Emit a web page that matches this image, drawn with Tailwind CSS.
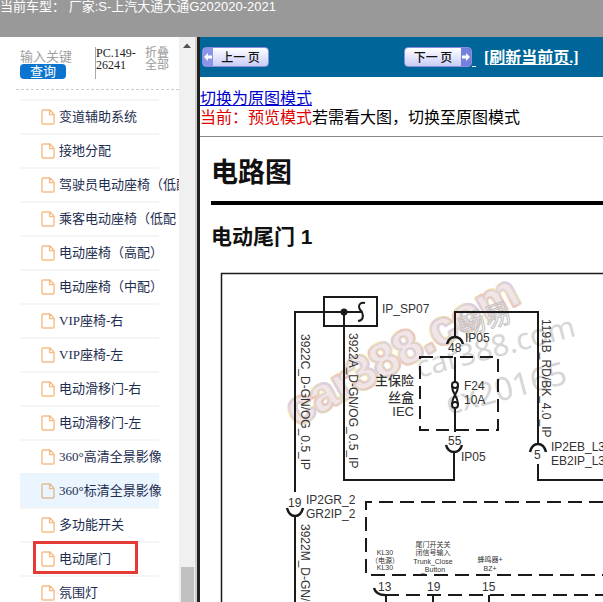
<!DOCTYPE html>
<html lang="zh-CN">
<head>
  <meta charset="UTF-8">
  <meta name="viewport" content="width=device-width, initial-scale=1.0">
  <title>电路图 - 电动尾门</title>
  <script src="https://cdn.jsdelivr.net/npm/@tailwindcss/browser@4"></script>
</head>
<body class="h-screen flex flex-col overflow-hidden bg-white font-['Liberation_Serif','Noto_Sans_CJK_SC',serif]">
  <!-- Current vehicle -->
  <header class="h-[37px] shrink-0 bg-[#999] text-white text-[13px] leading-[14px] whitespace-nowrap font-['Liberation_Sans','Noto_Sans_CJK_SC',sans-serif]">
    <span>当前车型：</span>
    <span>厂家:S-上汽大通大通G202020-2021</span>
  </header>

  <div class="flex-1 min-h-0 flex">
    <!-- Sidebar -->
    <aside class="w-[195px] shrink-0 flex">
      <div class="flex-1 min-w-0 flex flex-col overflow-hidden">
        <div class="h-[53px] shrink-0 ml-4 pl-1 flex border-b border-dashed border-[#ccc]">
          <form class="w-[75px] pt-3" onsubmit="return false">
            <input type="text" aria-label="输入关键字" placeholder="输入关键" class="block w-full h-[15px] text-[13px] leading-[15px] placeholder:text-[#a0a0a0] focus:outline-none">
            <button class="block w-[46px] h-[15px] rounded bg-[#0b74cf] text-white text-[13px] leading-[15px]">查询</button>
          </form>
          <div class="w-[50px] h-8 mt-[10px] border-l border-[#aaa] text-[12px] leading-3 text-[#222]">PC.149-<br>26241</div>
          <button class="self-start mt-[10px] w-6 text-[12px] leading-3 text-[#999] text-left">折叠全部</button>
        </div>
        <nav class="flex-1 min-h-0 overflow-hidden pt-[9px] pl-5">
          <ul id="tree" class="w-[139px] text-[13px] text-[#1c2d4f] whitespace-nowrap">
            <li class="h-[34px] border-t-2 border-[#f5f5f5]"><a href="#" class="h-[31px] pl-[21px] flex items-center gap-1"><svg class="w-[14px] h-4 shrink-0" viewBox="0 0 14 16" fill="none" stroke="#f5bd85" stroke-width="1.4"><path d="M2 1H9L13 5.2V14Q13 15 12 15H2Q1 15 1 14V2Q1 1 2 1ZM8.6 1V5.6H13"/></svg>变道辅助系统</a></li>
            <li class="h-[34px] border-t-2 border-[#f5f5f5]"><a href="#" class="h-[31px] pl-[21px] flex items-center gap-1"><svg class="w-[14px] h-4 shrink-0" viewBox="0 0 14 16" fill="none" stroke="#f5bd85" stroke-width="1.4"><path d="M2 1H9L13 5.2V14Q13 15 12 15H2Q1 15 1 14V2Q1 1 2 1ZM8.6 1V5.6H13"/></svg>接地分配</a></li>
            <li class="h-[34px] border-t-2 border-[#f5f5f5]"><a href="#" class="h-[31px] pl-[21px] flex items-center gap-1"><svg class="w-[14px] h-4 shrink-0" viewBox="0 0 14 16" fill="none" stroke="#f5bd85" stroke-width="1.4"><path d="M2 1H9L13 5.2V14Q13 15 12 15H2Q1 15 1 14V2Q1 1 2 1ZM8.6 1V5.6H13"/></svg>驾驶员电动座椅（低配）</a></li>
            <li class="h-[34px] border-t-2 border-[#f5f5f5]"><a href="#" class="h-[31px] pl-[21px] flex items-center gap-1"><svg class="w-[14px] h-4 shrink-0" viewBox="0 0 14 16" fill="none" stroke="#f5bd85" stroke-width="1.4"><path d="M2 1H9L13 5.2V14Q13 15 12 15H2Q1 15 1 14V2Q1 1 2 1ZM8.6 1V5.6H13"/></svg>乘客电动座椅（低配</a></li>
            <li class="h-[34px] border-t-2 border-[#f5f5f5]"><a href="#" class="h-[31px] pl-[21px] flex items-center gap-1"><svg class="w-[14px] h-4 shrink-0" viewBox="0 0 14 16" fill="none" stroke="#f5bd85" stroke-width="1.4"><path d="M2 1H9L13 5.2V14Q13 15 12 15H2Q1 15 1 14V2Q1 1 2 1ZM8.6 1V5.6H13"/></svg>电动座椅（高配）</a></li>
            <li class="h-[34px] border-t-2 border-[#f5f5f5]"><a href="#" class="h-[31px] pl-[21px] flex items-center gap-1"><svg class="w-[14px] h-4 shrink-0" viewBox="0 0 14 16" fill="none" stroke="#f5bd85" stroke-width="1.4"><path d="M2 1H9L13 5.2V14Q13 15 12 15H2Q1 15 1 14V2Q1 1 2 1ZM8.6 1V5.6H13"/></svg>电动座椅（中配）</a></li>
            <li class="h-[34px] border-t-2 border-[#f5f5f5]"><a href="#" class="h-[31px] pl-[21px] flex items-center gap-1"><svg class="w-[14px] h-4 shrink-0" viewBox="0 0 14 16" fill="none" stroke="#f5bd85" stroke-width="1.4"><path d="M2 1H9L13 5.2V14Q13 15 12 15H2Q1 15 1 14V2Q1 1 2 1ZM8.6 1V5.6H13"/></svg>VIP座椅-右</a></li>
            <li class="h-[34px] border-t-2 border-[#f5f5f5]"><a href="#" class="h-[31px] pl-[21px] flex items-center gap-1"><svg class="w-[14px] h-4 shrink-0" viewBox="0 0 14 16" fill="none" stroke="#f5bd85" stroke-width="1.4"><path d="M2 1H9L13 5.2V14Q13 15 12 15H2Q1 15 1 14V2Q1 1 2 1ZM8.6 1V5.6H13"/></svg>VIP座椅-左</a></li>
            <li class="h-[34px] border-t-2 border-[#f5f5f5]"><a href="#" class="h-[31px] pl-[21px] flex items-center gap-1"><svg class="w-[14px] h-4 shrink-0" viewBox="0 0 14 16" fill="none" stroke="#f5bd85" stroke-width="1.4"><path d="M2 1H9L13 5.2V14Q13 15 12 15H2Q1 15 1 14V2Q1 1 2 1ZM8.6 1V5.6H13"/></svg>电动滑移门-右</a></li>
            <li class="h-[34px] border-t-2 border-[#f5f5f5]"><a href="#" class="h-[31px] pl-[21px] flex items-center gap-1"><svg class="w-[14px] h-4 shrink-0" viewBox="0 0 14 16" fill="none" stroke="#f5bd85" stroke-width="1.4"><path d="M2 1H9L13 5.2V14Q13 15 12 15H2Q1 15 1 14V2Q1 1 2 1ZM8.6 1V5.6H13"/></svg>电动滑移门-左</a></li>
            <li class="h-[34px] border-t-2 border-[#f5f5f5]"><a href="#" class="h-[31px] pl-[21px] flex items-center gap-1"><svg class="w-[14px] h-4 shrink-0" viewBox="0 0 14 16" fill="none" stroke="#f5bd85" stroke-width="1.4"><path d="M2 1H9L13 5.2V14Q13 15 12 15H2Q1 15 1 14V2Q1 1 2 1ZM8.6 1V5.6H13"/></svg>360°高清全景影像</a></li>
            <li class="h-[34px] border-t-2 border-[#eaf5ff] bg-[#eaf5ff]"><a href="#" class="h-[31px] pl-[21px] flex items-center gap-1"><svg class="w-[14px] h-4 shrink-0" viewBox="0 0 14 16" fill="none" stroke="#e3bd92" stroke-width="1.4"><path d="M2 1H9L13 5.2V14Q13 15 12 15H2Q1 15 1 14V2Q1 1 2 1ZM8.6 1V5.6H13"/></svg>360°标清全景影像</a></li>
            <li class="h-[34px] border-t-2 border-[#f5f5f5]"><a href="#" class="h-[31px] pl-[21px] flex items-center gap-1"><svg class="w-[14px] h-4 shrink-0" viewBox="0 0 14 16" fill="none" stroke="#f5bd85" stroke-width="1.4"><path d="M2 1H9L13 5.2V14Q13 15 12 15H2Q1 15 1 14V2Q1 1 2 1ZM8.6 1V5.6H13"/></svg>多功能开关</a></li>
            <li class="relative h-[34px] border-t-2 border-[#f5f5f5]"><a href="#" class="h-[31px] pl-[21px] flex items-center gap-1"><svg class="w-[14px] h-4 shrink-0" viewBox="0 0 14 16" fill="none" stroke="#f5bd85" stroke-width="1.4"><path d="M2 1H9L13 5.2V14Q13 15 12 15H2Q1 15 1 14V2Q1 1 2 1ZM8.6 1V5.6H13"/></svg>电动尾门</a>
              <span class="absolute left-[13px] -top-0.5 w-[105px] h-[33px] border-3 border-[#e53935] pointer-events-none"></span>
            </li>
            <li class="h-[34px] border-t-2 border-[#f5f5f5]"><a href="#" class="h-[31px] pl-[21px] flex items-center gap-1"><svg class="w-[14px] h-4 shrink-0" viewBox="0 0 14 16" fill="none" stroke="#f5bd85" stroke-width="1.4"><path d="M2 1H9L13 5.2V14Q13 15 12 15H2Q1 15 1 14V2Q1 1 2 1ZM8.6 1V5.6H13"/></svg>氛围灯</a></li>
          </ul>
        </nav>
      </div>
      <!-- Scrollbar -->
      <div class="w-4 shrink-0 flex flex-col items-center justify-between bg-[#f0f0f0]">
        <svg class="w-4 h-[17px]" viewBox="0 0 16 17"><path d="M4 11L8 6.5L12 11Z" fill="#505050"/></svg>
        <div class="w-[13px] h-[35px] bg-[#c1c1c1]"></div>
      </div>
    </aside>
    <!-- Frame divider -->
    <div class="w-[5px] shrink-0 bg-[#222] border-l-2 border-[#d4d0c8]"></div>

    <!-- Content -->
    <main class="flex-1 min-w-0 overflow-hidden">
      <div class="h-10 pl-[2px] flex items-center bg-[#069] text-white">
        <button class="w-[67px] h-5 flex items-stretch rounded-sm border border-[#8890dd] bg-linear-to-b from-white to-[#c9cdf6] text-[#111] text-[12px] leading-[18px] font-medium font-['Noto_Sans_CJK_SC',sans-serif]">
          <svg class="w-[10px] h-full shrink-0 bg-[#8c95e6]" viewBox="0 0 10 18"><path d="M1 9L5 5V7.5H9V10.5H5V13Z" fill="#fff"/></svg>
          <span class="flex-1 whitespace-nowrap">上一 页</span>
        </button>
        <a href="#" class="ml-[135px] flex items-center">
          <span class="w-[68px] h-5 flex items-stretch rounded-sm border border-[#8890dd] bg-linear-to-b from-white to-[#c9cdf6] text-[#111] text-[12px] leading-[18px] font-medium font-['Noto_Sans_CJK_SC',sans-serif]">
            <span class="flex-1 text-center whitespace-nowrap">下一 页</span>
            <svg class="w-[10px] h-full shrink-0 bg-[#7480dc]" viewBox="0 0 10 18"><path d="M9 9L5 5V7.5H1V10.5H5V13Z" fill="#fff"/></svg>
          </span>
          <span class="self-end w-1 border-b border-white"></span>
        </a>
        <a href="#" class="ml-2 pt-0.5 text-[16px] leading-5 font-bold underline whitespace-nowrap">[刷新当前页.]</a>
      </div>

      <div class="pt-3 pb-[9px] text-[16px] leading-[19px] text-black border-b border-[#888] whitespace-nowrap">
        <a href="#" class="text-[#0000cc] underline">切换为原图模式</a>
        <p><span class="text-[#e00000]">当前：预览模式</span>若需看大图，切换至原图模式</p>
      </div>

      <article class="pl-[11px] font-['Liberation_Sans','Noto_Sans_CJK_SC',sans-serif] text-[#111] font-bold">
        <h1 class="pt-[18px] pb-[10px] text-[27px] leading-9 border-b-4 border-black">电路图</h1>
        <h2 class="pt-[17px] pb-2 text-[21px] leading-[30px]">电动尾门 1</h2>
      </article>

      <!-- Wiring diagram -->
      <svg class="block w-full h-auto font-['Liberation_Sans','Noto_Sans_CJK_SC',sans-serif]" viewBox="200 260 403 342" fill="none" stroke="#1a1a1a" stroke-width="2">
        <linearGradient id="rainbow" gradientUnits="userSpaceOnUse" x1="0" y1="0" x2="26" y2="-20" spreadMethod="repeat">
          <stop offset="0" stop-color="#f0c0b0"/>
          <stop offset=".3" stop-color="#efe9b4"/>
          <stop offset=".6" stop-color="#d9cbe2"/>
          <stop offset=".8" stop-color="#e9dcb0"/>
          <stop offset="1" stop-color="#f0c0b0"/>
        </linearGradient>
        <g transform="translate(296 427) rotate(-29)" font-size="47" font-weight="bold" stroke-linejoin="round">
          <text fill="none" stroke="url(#rainbow)" stroke-width="4">car388.com</text>
          <text fill="#f1e5e6" stroke="#dccfd6" stroke-width="1">car388.com</text>
        </g>
        <g stroke="none" fill="#d6d6d6">
          <text transform="translate(419 378) rotate(-15)" font-size="30" font-family="Noto Sans">car388.com</text>
          <text transform="translate(449 415) rotate(-15)" font-size="32" font-family="Noto Sans">cx20165</text>
          <text transform="translate(462 337) rotate(-18)" font-size="27" fill="#fff" fill-opacity=".3" stroke="#c4c0c0" stroke-width="1">畅易</text>
        </g>

        <path d="M603 273.500H221.500V602" stroke-width="1.500"/>
        <!-- Splice -->
        <rect x="324" y="297" width="53" height="29"/>
        <path d="M356 312H295V492M344 312V480H454V452M295 516V602"/>
        <circle cx="344" cy="312" r="3.500" fill="#1a1a1a" stroke="none"/>
        <path d="M365 303Q359 302 359 307Q359 309 362 312Q365 320 358 321M356 312H362"/>
        <!-- Fuse box -->
        <path d="M455 337V312H538V443M455 357V382M455 409V432"/>
        <path d="M447 344Q449 337 455 337Q461 337 463 344" stroke-width="2.500"/>
        <path d="M420 357H498V430H420Z" stroke-dasharray="13 7"/>
        <circle cx="455" cy="385" r="3"/>
        <circle cx="455" cy="405" r="3"/>
        <path d="M452 386C452 394 458 396 458 404M458 386C458 394 452 396 452 404"/>
        <path d="M446 445Q448 452 454 452Q460 452 462 445M287 508Q289 516 295 516Q301 516 303 508M530 452Q532 444 538 444Q544 444 546 452" stroke-width="2.500"/>
        <path d="M538 464V480H603"/>
        <!-- Control unit -->
        <path d="M603 502H366V575H603" stroke-dasharray="14 7"/>
        <path d="M374 588Q376 595 385 595" stroke-width="2.500"/>
        <path d="M385 595H603" stroke-dasharray="14 7"/>
        <path d="M386 595V602M433 595V602M489 595V602"/>

        <g stroke="none" fill="#333" font-size="12">
          <text x="382" y="313">IP_SP07</text>
          <text x="465" y="342">IP05</text>
          <text x="448" y="352">48</text>
          <text x="464" y="390">F24</text>
          <text x="464" y="404">10A</text>
          <text x="448" y="445">55</text>
          <text x="461" y="461">IP05</text>
          <text x="551" y="451">IP2EB_L3</text>
          <text x="551" y="465">EB2IP_L3</text>
          <text x="534" y="459">5</text>
          <text x="288" y="507">19</text>
          <text x="306" y="504">IP2GR_2</text>
          <text x="306" y="518">GR2IP_2</text>
          <text x="378" y="591">13</text>
          <text x="427" y="591">19</text>
          <text x="482" y="591">15</text>
          <text transform="translate(301 334) rotate(90)">3922C_D-GN/OG_0.5_IP</text>
          <text transform="translate(349 333) rotate(90)">3922A_D-GN/OG_0.5_IP</text>
          <text transform="translate(542 319) rotate(90)">1191B_RD/BK_4.0_IP</text>
          <text transform="translate(301 524) rotate(90)">3922M_D-GN/OG_0.5</text>
          <g font-size="13" font-weight="500" text-anchor="end">
            <text x="414" y="385">主保险</text>
            <text x="414" y="402">丝盒</text>
            <text x="414" y="416">IEC</text>
          </g>
          <g font-size="7" text-anchor="middle">
            <text x="385" y="555">KL30</text>
            <text x="385" y="563">（电源）</text>
            <text x="385" y="570">KL30</text>
            <text x="433" y="547">尾门开关关</text>
            <text x="433" y="555">闭信号输入</text>
            <text x="433" y="564">Trunk_Close</text>
            <text x="433" y="572">_Button</text>
            <text x="490" y="562">蜂鸣器+</text>
            <text x="490" y="571">BZ+</text>
          </g>
        </g>
      </svg>
    </main>
  </div>
</body>
</html>
